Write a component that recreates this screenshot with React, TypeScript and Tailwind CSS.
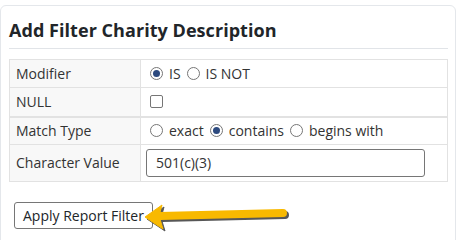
import React from "react";

function Radio({ checked }: { checked?: boolean }) {
  return (
    <span className="inline-flex items-center justify-center w-[13px] h-[13px] rounded-full border border-[#767676] bg-white shrink-0">
      {checked && <span className="w-[7px] h-[7px] rounded-full bg-[#2d4a7f]" />}
    </span>
  );
}

function Arrow() {
  return (
    <svg className="absolute left-[140px] top-[198px]" width="160" height="40" viewBox="0 0 160 40">
      <g transform="translate(2,2)" fill="#3a3a3a" stroke="#3a3a3a" opacity="0.85">
        <path d="M20 18 L143 15" strokeWidth="8" strokeLinecap="round" fill="none" />
        <path d="M5 19 L22 7 L19 18 L23 31 Z" strokeWidth="1" strokeLinejoin="round" />
      </g>
      <g fill="#f8b900" stroke="#f8b900">
        <path d="M20 18 L143 15" strokeWidth="8" strokeLinecap="round" fill="none" />
        <path d="M5 19 L22 7 L19 18 L23 31 Z" strokeWidth="1" strokeLinejoin="round" />
      </g>
    </svg>
  );
}

export default function App() {
  const font = { fontFamily: '"Open Sans", "Noto Sans", sans-serif' };
  return (
    <div className="relative w-[459px] h-[240px] overflow-hidden bg-white text-[#333]" style={font}>
      <div className="mt-[5px] w-[456px] h-[260px] border border-[#e4e7eb] rounded-[6px] pl-[8px]">
        <div className="w-[439px] border-b border-[#e1e4e8] h-[43px] pt-[12px]">
          <h2 className="text-[18px] font-bold leading-[24px] text-[#212529] tracking-[0.05px]">Add Filter Charity Description</h2>
        </div>
        <table className="mt-[10px] w-[439px] border-collapse text-[14px] leading-[20px]">
          <tbody>
            <tr className="h-[28px]">
              <td className="w-[131px] border border-[#e2e2e2] bg-[#f8f8f8] pl-[6px]">Modifier</td>
              <td className="border border-[#e2e2e2] pl-[9px]">
                <div className="flex items-center gap-[6px]">
                  <Radio checked /> <span>IS</span>
                  <Radio /> <span>IS NOT</span>
                </div>
              </td>
            </tr>
            <tr className="h-[29px]">
              <td className="border border-[#e2e2e2] border-b-2 bg-[#f8f8f8] pl-[6px]">NULL</td>
              <td className="border border-[#e2e2e2] border-b-2 pl-[9px]">
                <span className="block w-[13px] h-[13px] rounded-[2px] border border-[#767676] bg-white" />
              </td>
            </tr>
            <tr className="h-[28px]">
              <td className="border border-[#e2e2e2] bg-[#f8f8f8] pl-[6px]">Match Type</td>
              <td className="border border-[#e2e2e2] pl-[9px]">
                <div className="flex items-center gap-[6px]">
                  <Radio /> <span>exact</span>
                  <Radio checked /> <span>contains</span>
                  <Radio /> <span>begins with</span>
                </div>
              </td>
            </tr>
            <tr className="h-[37px]">
              <td className="border border-[#e2e2e2] bg-[#f8f8f8] pl-[6px]">Character Value</td>
              <td className="border border-[#e2e2e2] pl-[5px]">
                <div className="w-[279px] h-[28px] border border-[#767676] rounded-[3px] pl-[9px] flex items-center">501(c)(3)</div>
              </td>
            </tr>
          </tbody>
        </table>
        <div className="mt-[20px] ml-[5px] inline-flex items-center h-[27px] px-[8px] border border-[#767676] rounded-[3px] bg-white text-[14px] text-[#212529]">
          Apply Report Filter
        </div>
      </div>
      <Arrow />
    </div>
  );
}
